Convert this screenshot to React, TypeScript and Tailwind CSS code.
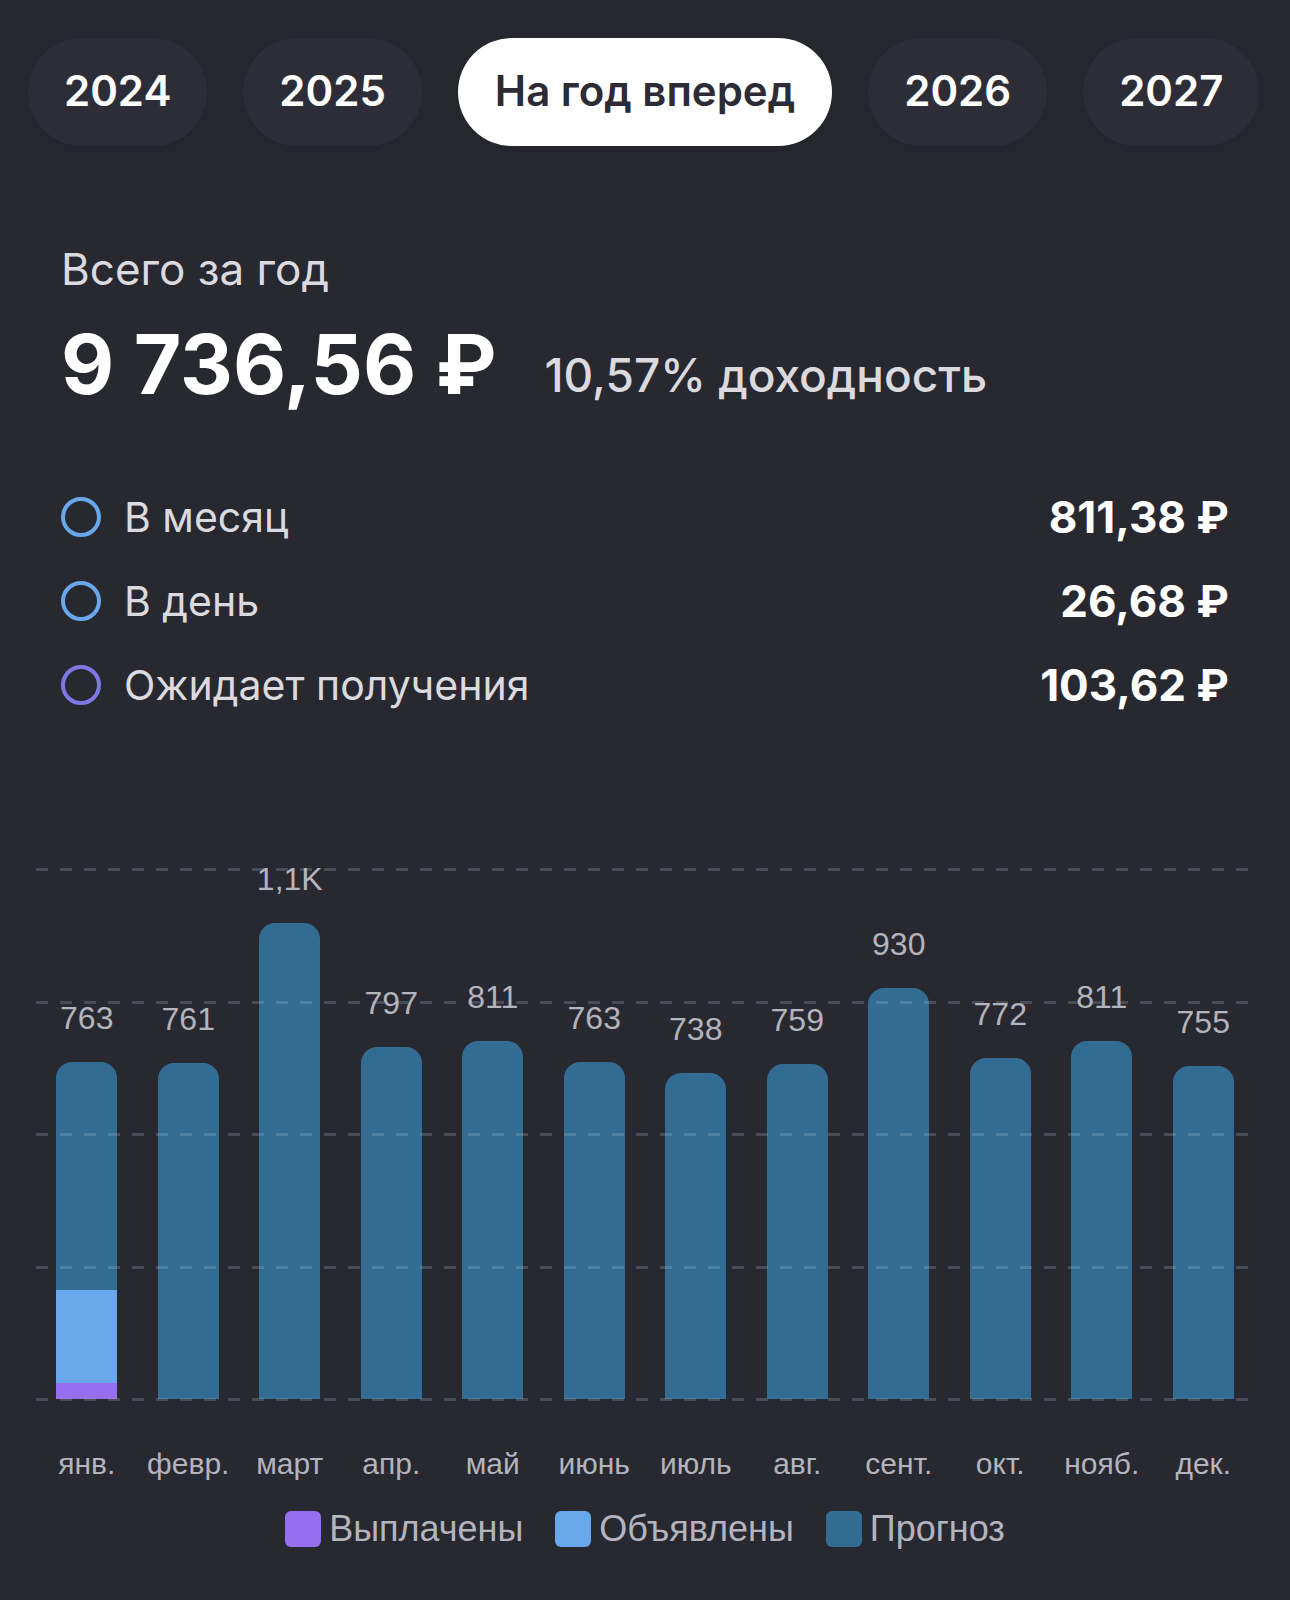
const periods = ['2024', '2025', 'На год вперед', '2026', '2027'];
const selected = 'На год вперед';

const stats = [
  { label: 'В месяц', value: '811,38 ₽', ring: 'border-[#68a8ea]' },
  { label: 'В день', value: '26,68 ₽', ring: 'border-[#68a8ea]' },
  { label: 'Ожидает получения', value: '103,62 ₽', ring: 'border-[#7f78e2]' },
];

type Month = { name: string; total: number; label?: string; announced?: number; paid?: number };

const axisMax = 1200;
const months: Month[] = [
  { name: 'янв.', total: 763, announced: 209, paid: 37 },
  { name: 'февр.', total: 761 },
  { name: 'март', total: 1077, label: '1,1K' },
  { name: 'апр.', total: 797 },
  { name: 'май', total: 811 },
  { name: 'июнь', total: 763 },
  { name: 'июль', total: 738 },
  { name: 'авг.', total: 759 },
  { name: 'сент.', total: 930 },
  { name: 'окт.', total: 772 },
  { name: 'нояб.', total: 811 },
  { name: 'дек.', total: 755 },
];

const legend = [
  { name: 'Выплачены', color: 'bg-[#966ef0]' },
  { name: 'Объявлены', color: 'bg-[#68a8ea]' },
  { name: 'Прогноз', color: 'bg-[#336c92]' },
];

const percent = (part: number, whole: number) => `${(part / whole) * 100}%`;

function PeriodTabs() {
  return (
    <nav aria-label="Период" className="flex gap-9 px-7">
      {periods.map((period) => (
        <button
          key={period}
          type="button"
          aria-pressed={period === selected}
          className={
            period === selected
              ? 'h-27 shrink-0 rounded-full bg-white px-[37px] pb-1 text-[42px] font-semibold whitespace-nowrap text-[#2c2b36] shadow-[0_6px_28px_rgba(0,0,0,0.1)]'
              : 'h-27 shrink-0 rounded-full bg-[#2d2d37] px-9 pb-1 text-[42px] font-semibold whitespace-nowrap text-white shadow-[0_6px_28px_rgba(0,0,0,0.1)]'
          }
        >
          {period}
        </button>
      ))}
    </nav>
  );
}

function Summary() {
  return (
    <section className="mt-[95px] px-[61px]">
      <h1 className="text-[44px] leading-14 text-[#dadadf]">Всего за год</h1>
      <div className="mt-5 flex items-end gap-12">
        <p className="text-[82px] leading-24 font-bold whitespace-nowrap text-white">9&nbsp;736,56 ₽</p>
        <p className="text-[46px] leading-19 font-medium whitespace-nowrap text-[#dadadf]">10,57% доходность</p>
      </div>
      <dl className="mt-19 flex flex-col gap-7">
        {stats.map((stat) => (
          <div key={stat.label} className="flex items-center">
            <span className={`size-10 shrink-0 rounded-full border-4 ${stat.ring}`} />
            <dt className="ml-[23px] text-[41px] leading-14 text-[#dadadf]">{stat.label}</dt>
            <dd className="ml-auto text-[44px] leading-14 font-bold text-white">{stat.value}</dd>
          </div>
        ))}
      </dl>
    </section>
  );
}

function Bar({ month }: { month: Month }) {
  const { total, announced = 0, paid = 0 } = month;
  return (
    <div
      className="flex w-3/5 flex-col overflow-hidden rounded-t-2xl bg-[#336c92]"
      style={{ height: percent(total, axisMax) }}
    >
      <span className="mt-auto bg-[#68a8ea]" style={{ height: percent(announced, total) }} />
      <span className="bg-[#966ef0]" style={{ height: percent(paid, total) }} />
    </div>
  );
}

function Chart() {
  return (
    <section aria-label="Выплаты по месяцам" className="mt-39 px-9 font-['Liberation_Sans',Arial,sans-serif] text-[#b3b4bd]">
      <div className="relative h-[530px]">
        <div className="flex h-full items-end">
          {months.map((month) => (
            <div key={month.name} className="flex h-full flex-1 items-end justify-center">
              <Bar month={month} />
            </div>
          ))}
        </div>
        <div className="absolute inset-x-0 -top-px -bottom-0.5 flex flex-col justify-between">
          {[4, 3, 2, 1, 0].map((line) => (
            <div
              key={line}
              className="h-[3px] bg-[repeating-linear-gradient(to_right,rgba(175,195,210,0.23)_0_12px,transparent_12px_24px)]"
            />
          ))}
        </div>
        <div className="absolute inset-0 flex">
          {months.map((month) => (
            <div key={month.name} className="flex h-full flex-1 flex-col items-center justify-end">
              <span className="text-[32px] leading-10">{month.label ?? month.total}</span>
              <span className="mt-6 shrink-0" style={{ height: percent(month.total, axisMax) }} />
            </div>
          ))}
        </div>
      </div>
      <div className="mt-[47px] flex">
        {months.map((month) => (
          <span key={month.name} className="flex-1 text-center text-[30px] leading-9 whitespace-nowrap">
            {month.name}
          </span>
        ))}
      </div>
      <ul className="mt-[27px] flex justify-center gap-8">
        {legend.map((item) => (
          <li key={item.name} className="flex items-center gap-2">
            <span className={`size-9 rounded-md ${item.color}`} />
            <span className="text-[36px] leading-10">{item.name}</span>
          </li>
        ))}
      </ul>
    </section>
  );
}

export default function App() {
  return (
    <main className="min-h-screen overflow-hidden bg-[#282831] pt-[38px] pb-12 font-['Inter',sans-serif]">
      <PeriodTabs />
      <Summary />
      <Chart />
    </main>
  );
}
